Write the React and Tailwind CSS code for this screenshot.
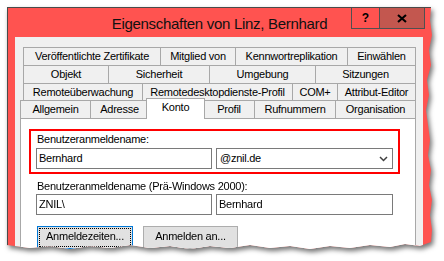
export default function App() {
  const font = "font-['Liberation_Sans',Arial,sans-serif]";
  const tab = "flex items-center justify-center border-t border-l border-[#a8a8a8] bg-[#f0f0f0] text-[11px] tracking-[-0.25px] text-black whitespace-nowrap";
  const rows = [
    [["Veröffentlichte Zertifikate", "w-[137px]"], ["Mitglied von", "w-[75px]"], ["Kennwortreplikation", "w-[112px]"], ["Einwählen", "w-[69px]"]],
    [["Objekt", "w-[85px]"], ["Sicherheit", "w-[101px]"], ["Umgebung", "w-[106px]"], ["Sitzungen", "w-[101px]"]],
    [["Remoteüberwachung", "w-[119px]"], ["Remotedesktopdienste-Profil", "w-[150px]"], ["COM+", "w-[45px]"], ["Attribut-Editor", "w-[79px]"]],
  ];
  const heights = ["h-[18px]", "h-[18px]", "h-[17px]"];
  return (
    <div className={`w-[444px] h-[261px] bg-white overflow-hidden ${font}`}>
      <div className="ml-[7px] pt-[7px] w-[427px] [filter:drop-shadow(2px_3px_2.5px_rgba(0,0,0,0.55))]">
        <div className="h-[245px] w-[427px] bg-[#ff5350] border-t border-l border-[#4a4a4a] flex flex-col [clip-path:polygon(0_0,424px_0,423px_13px,425px_28px,422px_43px,424px_58px,420px_73px,422px_88px,419px_103px,421px_118px,423px_133px,421px_148px,424px_163px,422px_178px,425px_193px,423px_208px,425px_223px,424px_235px,413px_239px,398px_237px,383px_240px,363px_238px,343px_241px,323px_239px,303px_242px,283px_239px,263px_241px,243px_238px,223px_241px,203px_239px,183px_242px,163px_239px,143px_241px,123px_238px,103px_241px,83px_239px,63px_242px,43px_239px,23px_241px,0_238px)]">
          {/* title bar */}
          <div className="h-[29px] flex items-start pl-[80px] shrink-0">
            <div className="flex-1 text-center text-[15px] tracking-[-0.3px] leading-[29px] text-[#111] pt-[1px]">
              Eigenschaften von Linz, Bernhard
            </div>
            <div className="flex h-[21px]">
              <div className="w-[29px] h-[21px] border-l border-b border-r border-[#505050] flex items-center justify-center text-[12px] font-bold text-black leading-none pb-[1px]">?</div>
              <div className="w-[45px] h-[21px] border-b border-r border-[#505050] bg-[#c3574f] flex items-center justify-center">
                <svg width="10" height="9" viewBox="0 0 10 9">
                  <path d="M1 1 L9 8 M9 1 L1 8" stroke="#000" strokeWidth="2.1" />
                </svg>
              </div>
            </div>
            <div className="w-[9px]" />
          </div>
          {/* gray body */}
          <div className="ml-[7px] w-[408px] flex-1 bg-[#f0f0f0] pt-[10px] pl-[5px] flex flex-col">
            <div className="w-[396px] flex flex-col flex-1">
              {rows.map((r, i) => (
                <div key={i} className={`flex ml-[3px] ${heights[i]}`}>
                  {r.map(([t, w], j) => (
                    <div key={t} className={`${tab} ${w} ${j === r.length - 1 ? "border-r" : ""}`}>{t}</div>
                  ))}
                </div>
              ))}
              <div className="flex items-end h-[18px]">
                <div className={`${tab} w-[70px] h-[18px]`}>Allgemein</div>
                <div className={`${tab} w-[58px] h-[18px]`}>Adresse</div>
                <div className={`${tab} w-[59px] h-[21px] -mx-[2px] -mb-px relative z-10 bg-white border-r pb-[3px]`}>Konto</div>
                <div className={`${tab} w-[51px] h-[18px]`}>Profil</div>
                <div className={`${tab} w-[81px] h-[18px]`}>Rufnummern</div>
                <div className={`${tab} w-[81px] h-[18px] border-r`}>Organisation</div>
              </div>
              {/* content panel */}
              <div className="flex-1 bg-white border-t border-l border-r border-[#a8a8a8] text-[11px] tracking-[-0.25px] text-black flex flex-col">
                <div className="mt-[10px] ml-[8px] w-[371px] border-2 border-[#ff0000] pt-[1px] pl-[5px] pr-[5px] pb-[3px]">
                  <div className="leading-[14px] pl-[1px]">Benutzeranmeldename:</div>
                  <div className="mt-[2px] flex gap-[4px]">
                    <div className="w-[176px] h-[21px] border border-[#7a7a7a] flex items-center pl-[2px]">Bernhard</div>
                    <div className="w-[177px] h-[21px] border border-[#7a7a7a] flex items-center pl-[3px] pr-[4px]">
                      <span className="flex-1">@znil.de</span>
                      <svg width="9" height="6" viewBox="0 0 9 6">
                        <path d="M1 1 L4.5 4.5 L8 1" stroke="#404040" strokeWidth="1.5" fill="none" />
                      </svg>
                    </div>
                  </div>
                </div>
                <div className="pl-[15px] mt-[5px]">
                  <div className="leading-[14px] pl-[1px]">Benutzeranmeldename (Prä-Windows 2000):</div>
                  <div className="mt-[1px] flex gap-[4px]">
                    <div className="w-[176px] h-[21px] border border-[#7a7a7a] flex items-center pl-[2px]">ZNIL\</div>
                    <div className="w-[177px] h-[21px] border border-[#7a7a7a] flex items-center pl-[2px]">Bernhard</div>
                  </div>
                  <div className="mt-[11px] flex gap-[10px] pl-[1px]">
                    <div className="w-[96px] h-[23px] border border-[#0078d7] bg-[#e1e1e1] p-px flex">
                      <div className="flex-1 border border-dotted border-black flex items-center justify-center pb-[2px]">Anmeldezeiten...</div>
                    </div>
                    <div className="w-[95px] h-[23px] border border-[#adadad] bg-[#e1e1e1] flex items-center justify-center pb-[2px]">Anmelden an...</div>
                  </div>
                </div>
              </div>
            </div>
          </div>
        </div>
      </div>
    </div>
  );
}
